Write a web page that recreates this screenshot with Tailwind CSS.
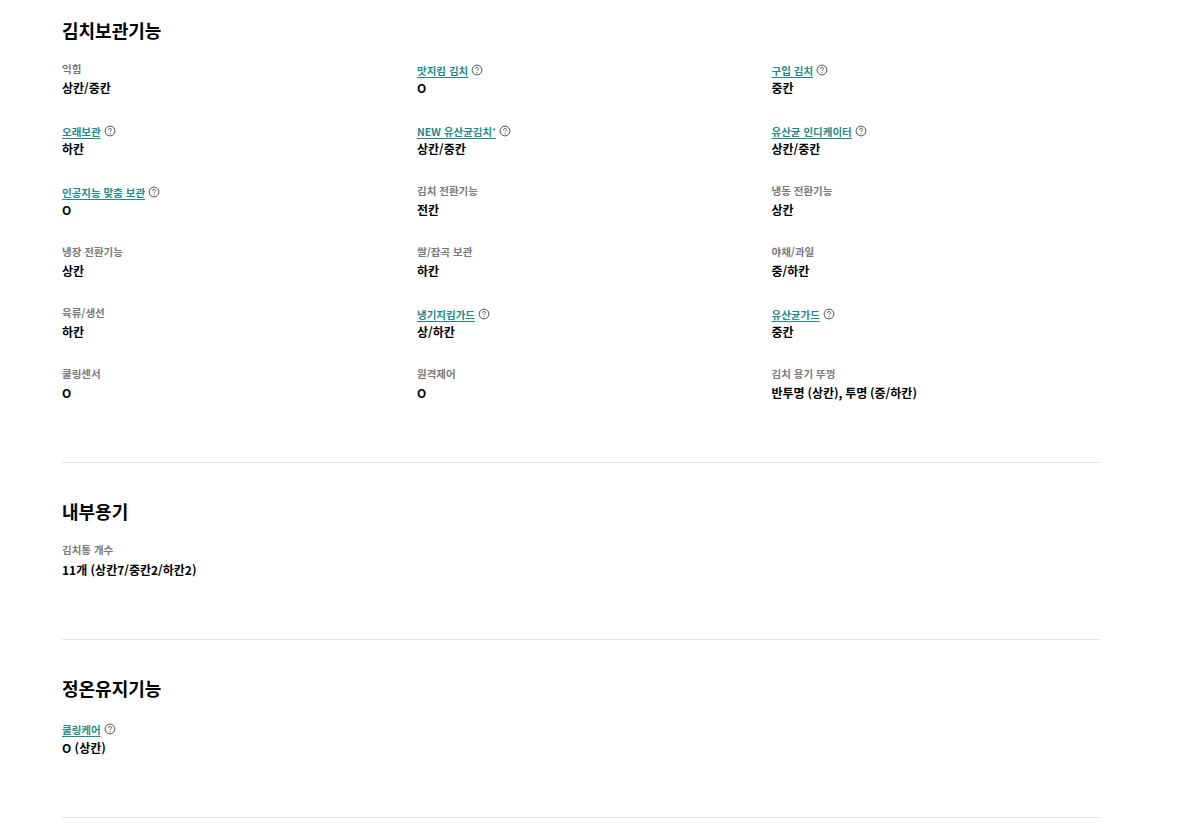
<!DOCTYPE html>
<html lang="ko">
<head>
  <meta charset="UTF-8">
  <title>제품 사양</title>
  <script src="https://cdn.jsdelivr.net/npm/@tailwindcss/browser@4"></script>
</head>
<body class="bg-white text-black font-['Noto_Sans_CJK_KR','Noto_Sans',sans-serif]">
  <main class="w-[1038px] ml-[62px] pt-[17px]">

    <section class="h-[446px] border-b border-[#e4e4e4]">
      <h2 class="text-[18px] leading-[27px] font-bold">김치보관기능</h2>
      <div class="grid grid-cols-[355px_354.5px_328px] auto-rows-[61px] mt-[16px]">
        <div><p class="h-[19px] text-[10.5px] leading-[18px] font-bold text-[#7a7a7a]">익힘</p><p class="text-[12px] leading-[18px] font-bold [word-spacing:-0.6px]">상칸/중칸</p></div>
        <div><p class="h-[19px] pt-[1px] flex items-center text-[10.5px] leading-[17px] font-bold text-[#1f8a8c]"><a href="#" class="underline underline-offset-2">맛지킴 김치</a><svg class="ml-[3px] w-[12px] h-[12px]" viewBox="0 0 12 12" fill="none" stroke="#555"><circle cx="6" cy="6" r="4.9"/><path d="M4.6 4.8a1.4 1.4 0 1 1 2 1.2c-.4.2-.6.4-.6.9M6 8.2v1"/></svg></p><p class="text-[12px] leading-[18px] font-bold [word-spacing:-0.6px]">O</p></div>
        <div><p class="h-[19px] pt-[1px] flex items-center text-[10.5px] leading-[17px] font-bold text-[#1f8a8c]"><a href="#" class="underline underline-offset-2">구입 김치</a><svg class="ml-[3px] w-[12px] h-[12px]" viewBox="0 0 12 12" fill="none" stroke="#555"><circle cx="6" cy="6" r="4.9"/><path d="M4.6 4.8a1.4 1.4 0 1 1 2 1.2c-.4.2-.6.4-.6.9M6 8.2v1"/></svg></p><p class="text-[12px] leading-[18px] font-bold [word-spacing:-0.6px]">중칸</p></div>

        <div><p class="h-[19px] pt-[1px] flex items-center text-[10.5px] leading-[17px] font-bold text-[#1f8a8c]"><a href="#" class="underline underline-offset-2">오래보관</a><svg class="ml-[3px] w-[12px] h-[12px]" viewBox="0 0 12 12" fill="none" stroke="#555"><circle cx="6" cy="6" r="4.9"/><path d="M4.6 4.8a1.4 1.4 0 1 1 2 1.2c-.4.2-.6.4-.6.9M6 8.2v1"/></svg></p><p class="text-[12px] leading-[18px] font-bold [word-spacing:-0.6px]">하칸</p></div>
        <div><p class="h-[19px] pt-[1px] flex items-center text-[10.5px] leading-[17px] font-bold text-[#1f8a8c]"><a href="#" class="underline underline-offset-2">NEW 유산균김치⁺</a><svg class="ml-[3px] w-[12px] h-[12px]" viewBox="0 0 12 12" fill="none" stroke="#555"><circle cx="6" cy="6" r="4.9"/><path d="M4.6 4.8a1.4 1.4 0 1 1 2 1.2c-.4.2-.6.4-.6.9M6 8.2v1"/></svg></p><p class="text-[12px] leading-[18px] font-bold [word-spacing:-0.6px]">상칸/중칸</p></div>
        <div><p class="h-[19px] pt-[1px] flex items-center text-[10.5px] leading-[17px] font-bold text-[#1f8a8c]"><a href="#" class="underline underline-offset-2">유산균 인디케이터</a><svg class="ml-[3px] w-[12px] h-[12px]" viewBox="0 0 12 12" fill="none" stroke="#555"><circle cx="6" cy="6" r="4.9"/><path d="M4.6 4.8a1.4 1.4 0 1 1 2 1.2c-.4.2-.6.4-.6.9M6 8.2v1"/></svg></p><p class="text-[12px] leading-[18px] font-bold [word-spacing:-0.6px]">상칸/중칸</p></div>

        <div><p class="h-[19px] pt-[1px] flex items-center text-[10.5px] leading-[17px] font-bold text-[#1f8a8c]"><a href="#" class="underline underline-offset-2">인공지능 맞춤 보관</a><svg class="ml-[3px] w-[12px] h-[12px]" viewBox="0 0 12 12" fill="none" stroke="#555"><circle cx="6" cy="6" r="4.9"/><path d="M4.6 4.8a1.4 1.4 0 1 1 2 1.2c-.4.2-.6.4-.6.9M6 8.2v1"/></svg></p><p class="text-[12px] leading-[18px] font-bold [word-spacing:-0.6px]">O</p></div>
        <div><p class="h-[19px] text-[10.5px] leading-[18px] font-bold text-[#7a7a7a]">김치 전환기능</p><p class="text-[12px] leading-[18px] font-bold [word-spacing:-0.6px]">전칸</p></div>
        <div><p class="h-[19px] text-[10.5px] leading-[18px] font-bold text-[#7a7a7a]">냉동 전환기능</p><p class="text-[12px] leading-[18px] font-bold [word-spacing:-0.6px]">상칸</p></div>

        <div><p class="h-[19px] text-[10.5px] leading-[18px] font-bold text-[#7a7a7a]">냉장 전환기능</p><p class="text-[12px] leading-[18px] font-bold [word-spacing:-0.6px]">상칸</p></div>
        <div><p class="h-[19px] text-[10.5px] leading-[18px] font-bold text-[#7a7a7a]">쌀/잡곡 보관</p><p class="text-[12px] leading-[18px] font-bold [word-spacing:-0.6px]">하칸</p></div>
        <div><p class="h-[19px] text-[10.5px] leading-[18px] font-bold text-[#7a7a7a]">야채/과일</p><p class="text-[12px] leading-[18px] font-bold [word-spacing:-0.6px]">중/하칸</p></div>

        <div><p class="h-[19px] text-[10.5px] leading-[18px] font-bold text-[#7a7a7a]">육류/생선</p><p class="text-[12px] leading-[18px] font-bold [word-spacing:-0.6px]">하칸</p></div>
        <div><p class="h-[19px] pt-[1px] flex items-center text-[10.5px] leading-[17px] font-bold text-[#1f8a8c]"><a href="#" class="underline underline-offset-2">냉기지킴가드</a><svg class="ml-[3px] w-[12px] h-[12px]" viewBox="0 0 12 12" fill="none" stroke="#555"><circle cx="6" cy="6" r="4.9"/><path d="M4.6 4.8a1.4 1.4 0 1 1 2 1.2c-.4.2-.6.4-.6.9M6 8.2v1"/></svg></p><p class="text-[12px] leading-[18px] font-bold [word-spacing:-0.6px]">상/하칸</p></div>
        <div><p class="h-[19px] pt-[1px] flex items-center text-[10.5px] leading-[17px] font-bold text-[#1f8a8c]"><a href="#" class="underline underline-offset-2">유산균가드</a><svg class="ml-[3px] w-[12px] h-[12px]" viewBox="0 0 12 12" fill="none" stroke="#555"><circle cx="6" cy="6" r="4.9"/><path d="M4.6 4.8a1.4 1.4 0 1 1 2 1.2c-.4.2-.6.4-.6.9M6 8.2v1"/></svg></p><p class="text-[12px] leading-[18px] font-bold [word-spacing:-0.6px]">중칸</p></div>

        <div><p class="h-[19px] text-[10.5px] leading-[18px] font-bold text-[#7a7a7a]">쿨링센서</p><p class="text-[12px] leading-[18px] font-bold [word-spacing:-0.6px]">O</p></div>
        <div><p class="h-[19px] text-[10.5px] leading-[18px] font-bold text-[#7a7a7a]">원격제어</p><p class="text-[12px] leading-[18px] font-bold [word-spacing:-0.6px]">O</p></div>
        <div><p class="h-[19px] text-[10.5px] leading-[18px] font-bold text-[#7a7a7a]">김치 용기 뚜껑</p><p class="text-[12px] leading-[18px] font-bold [word-spacing:-0.6px]">반투명 (상칸), 투명 (중/하칸)</p></div>
      </div>
    </section>

    <section class="h-[177px] pt-[35px] border-b border-[#e4e4e4]">
      <h2 class="text-[18px] leading-[27px] font-bold">내부용기</h2>
      <div class="mt-[16px]"><p class="h-[19px] text-[10.5px] leading-[18px] font-bold text-[#7a7a7a]">김치통 개수</p><p class="mt-[1px] text-[12px] leading-[18px] font-bold">11개 (상칸7/중칸2/하칸2)</p></div>
    </section>

    <section class="h-[178px] pt-[35px] border-b border-[#e4e4e4]">
      <h2 class="text-[18px] leading-[27px] font-bold">정온유지기능</h2>
      <div class="mt-[17px]"><p class="h-[19px] pt-[1px] flex items-center text-[10.5px] leading-[17px] font-bold text-[#1f8a8c]"><a href="#" class="underline underline-offset-2">쿨링케어</a><svg class="ml-[3px] w-[12px] h-[12px]" viewBox="0 0 12 12" fill="none" stroke="#555"><circle cx="6" cy="6" r="4.9"/><path d="M4.6 4.8a1.4 1.4 0 1 1 2 1.2c-.4.2-.6.4-.6.9M6 8.2v1"/></svg></p><p class="mt-[1px] text-[12px] leading-[18px] font-bold">O (상칸)</p></div>
    </section>

  </main>
</body>
</html>
